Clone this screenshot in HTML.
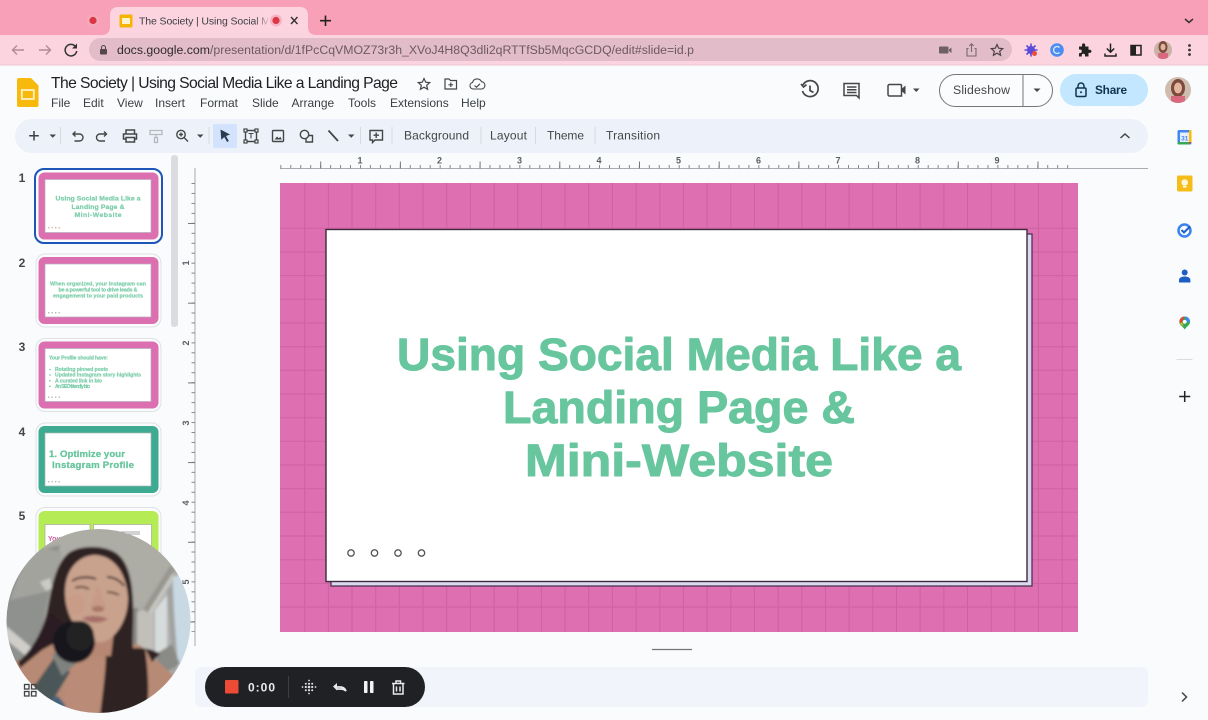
<!DOCTYPE html>
<html><head><meta charset="utf-8"><title>The Society</title>
<style>
html,body{margin:0;padding:0;width:1208px;height:720px;overflow:hidden;background:#f9fbfd}
svg{display:block;position:absolute;left:0;top:0}
text{font-family:"Liberation Sans",sans-serif}
.m{font-size:12px;fill:#3c4043}
.t{font-size:12px;fill:#444746}
.n{font-size:12px;fill:#444746;font-weight:bold}
.r{font-size:9px;fill:#5a5e63;font-weight:bold}
.i{fill:none;stroke:#444746;stroke-width:1.4}
.g{font-weight:bold;fill:#68c69e;stroke:#68c69e;stroke-linejoin:round;text-anchor:middle}
</style></head><body>
<svg width="1208" height="720" viewBox="0 0 1208 720" xmlns="http://www.w3.org/2000/svg">
<defs>
<pattern id="hs" x="280.300" y="160" width="9.960" height="20" patternUnits="userSpaceOnUse"><path d="M.5 5V8.500" stroke="#85888c" stroke-width="1"/></pattern>
<pattern id="hl" x="320.200" y="160" width="79.700" height="20" patternUnits="userSpaceOnUse"><path d="M.5 1.500V8.500" stroke="#75787c" stroke-width="1"/></pattern>
<pattern id="vs" x="180" y="183" width="20" height="9.960" patternUnits="userSpaceOnUse"><path d="M11.500 .5H15" stroke="#85888c" stroke-width="1"/></pattern>
<pattern id="vl" x="180" y="223" width="20" height="79.700" patternUnits="userSpaceOnUse"><path d="M8 .5H15" stroke="#75787c" stroke-width="1"/></pattern>
<linearGradient id="fade" x1="0" x2="1"><stop offset="0" stop-color="#fcd5e0" stop-opacity="0"/><stop offset="1" stop-color="#fcd5e0"/></linearGradient>
<clipPath id="cam"><circle cx="98.500" cy="621" r="92"/></clipPath>
<clipPath id="av1"><circle cx="1178" cy="90" r="13"/></clipPath>
<clipPath id="av2"><circle cx="1163" cy="50" r="9"/></clipPath>
<filter id="b0" x="-5%" y="-5%" width="110%" height="110%"><feGaussianBlur stdDeviation="1.300"/></filter>
</defs>

<!-- chrome -->
<rect width="1208" height="35" fill="#f9a0b9"/>
<rect y="35" width="1208" height="30" fill="#fcd4e0"/>
<path d="M102 35c5 0 8-3 8-8V15c0-5 3-8 8-8h182c5 0 8 3 8 8v12c0 5 3 8 8 8z" fill="#fcd4e0"/>
<rect y="64.500" width="1208" height="1" fill="#f2c6d3"/>
<circle cx="93" cy="20.500" r="6" fill="#f4a9b8"/><circle cx="93" cy="20.500" r="3.600" fill="#dc3545"/>
<rect x="119.500" y="14.500" width="13" height="13" rx="1.500" fill="#f4b400"/><rect x="122" y="18" width="8" height="6" fill="#fdf3d0"/>
<text x="139" y="24.500" font-size="10.500" fill="#3c4043" textLength="131">The Society | Using Social M</text>
<rect x="254" y="10" width="18" height="20" fill="url(#fade)"/>
<rect x="268" y="10" width="8" height="20" fill="#fcd5e0"/>
<circle cx="276" cy="20.500" r="6" fill="#f7b3c4"/><circle cx="276" cy="20.500" r="3.600" fill="#dc3545"/>
<path d="M291 17l6.500 7M297.500 17l-6.500 7" stroke="#333" stroke-width="1.400"/>
<path d="M325.500 15.500v10.500M320 20.700h11" stroke="#222" stroke-width="1.600"/>
<path d="M1185 19l4 3.500 4-3.500" fill="none" stroke="#333" stroke-width="1.500"/>
<path d="M24 50H12.500M17 45.500l-4.500 4.500 4.500 4.500" fill="none" stroke="#b08a96" stroke-width="1.400"/>
<path d="M39 50h11.500M46 45.500l4.500 4.500-4.500 4.500" fill="none" stroke="#b08a96" stroke-width="1.400"/>
<path d="M75.500 46.500a5.800 5.800 0 1 0 1.200 4.500" fill="none" stroke="#333" stroke-width="1.500"/><path d="M77 43.500v5h-5z" fill="#333"/>
<rect x="89" y="38" width="923" height="23" rx="11.500" fill="#e2bcc8"/>
<rect x="100" y="49" width="7" height="5.500" rx="1" fill="#55474c"/><path d="M101.500 49v-1.500a2 2 0 0 1 4 0V49" fill="none" stroke="#55474c" stroke-width="1.100"/>
<text x="117" y="53.800" font-size="12.300" textLength="577" fill="#6d5a62"><tspan fill="#2f2a2c">docs.google.com</tspan>/presentation/d/1fPcCqVMOZ73r3h_XVoJ4H8Q3dli2qRTTfSb5MqcGCDQ/edit#slide=id.p</text>
<path d="M940 46.500h7.500a1 1 0 0 1 1 1v5a1 1 0 0 1-1 1H940a1 1 0 0 1-1-1v-5a1 1 0 0 1 1-1zM949 49.500l2.500-2v5.500l-2.500-2z" fill="#6f5f66"/>
<path d="M968.500 48.500h-1.500v7.500h9v-7.500h-1.500M971.500 52v-8M969.300 46l2.200-2.200 2.200 2.200" fill="none" stroke="#7a6a70" stroke-width="1.100"/>
<path d="M997 44.500l1.700 3.700 4 .4-3 2.700.9 4-3.600-2.100-3.600 2.100.9-4-3-2.700 4-.4z" fill="none" stroke="#4a4045" stroke-width="1.200"/>
<circle cx="1031" cy="50" r="4" fill="#5b4bd8"/><path d="M1031 43.500v13M1024.500 50h13M1026.500 45.500l9 9M1035.500 45.500l-9 9" stroke="#5b4bd8" stroke-width="1.600"/><circle cx="1034.500" cy="53.500" r="2.500" fill="#ea4d3c"/>
<circle cx="1057" cy="50" r="6.800" fill="#4b8df0"/><path d="M1059.500 47.500a3.500 3.500 0 1 0 0 5" fill="none" stroke="#dfeafc" stroke-width="1.300"/>
<path d="M1079 46.500h3v-1.500a1.600 1.600 0 0 1 3.200 0v1.500h3.300v3.200h1.300a1.600 1.600 0 0 1 0 3.200h-1.300v3.600h-3.500v-1.200a1.600 1.600 0 0 0-3.200 0v1.200H1079v-3.400h1a1.800 1.800 0 0 0 0-3.600h-1z" fill="#222"/>
<path d="M1110.500 43.500v8.500M1106.800 48.500l3.700 3.700 3.700-3.700M1105 53.500v2.500h11v-2.500" fill="none" stroke="#222" stroke-width="1.500"/>
<rect x="1131" y="45.500" width="10" height="9.500" fill="none" stroke="#222" stroke-width="1.500"/><rect x="1131" y="45.500" width="5" height="9.500" fill="#222"/>
<g clip-path="url(#av2)"><rect x="1153" y="40" width="20" height="20" fill="#c9b3a5"/><ellipse cx="1163" cy="47" rx="4.500" ry="6" fill="#7c4a3c"/><ellipse cx="1163" cy="47" rx="2.500" ry="3.300" fill="#e0b49e"/><rect x="1158" y="53" width="10" height="7" fill="#d8697f"/></g>
<g fill="#333"><circle cx="1189.500" cy="45.500" r="1.400"/><circle cx="1189.500" cy="50" r="1.400"/><circle cx="1189.500" cy="54.500" r="1.400"/></g>

<!-- doc header -->
<path d="M19 78h12l7.500 7.500V105a2 2 0 0 1-2 2H19a2 2 0 0 1-2-2V80a2 2 0 0 1 2-2z" fill="#f6b90c"/>
<rect x="21.800" y="90" width="12" height="9" fill="none" stroke="#fdf0c0" stroke-width="1.800"/>
<text x="51" y="88" font-size="15.700" fill="#202124" textLength="347">The Society | Using Social Media Like a Landing Page</text>
<path d="M424 78.500l1.700 3.700 4 .4-3 2.700.9 4-3.600-2.100-3.600 2.100.9-4-3-2.700 4-.4z" class="i" style="stroke-width:1.200"/>
<path d="M445 79h4l1.500 1.500h6v8.500h-11.500zM450.800 82.500v4.500M448.500 84.800h4.600" class="i" style="stroke-width:1.200"/>
<path d="M473 89a3.300 3.300 0 0 1-.5-6.500 4.800 4.800 0 0 1 9-.8 3.700 3.700 0 0 1 .5 7.300zM474.500 85.500l2 1.700 3.500-3.400" class="i" style="stroke-width:1.100"/>
<g class="m"><text x="51" y="107">File</text><text x="83" y="107">Edit</text><text x="117" y="107">View</text><text x="155" y="107">Insert</text><text x="200" y="107">Format</text><text x="252" y="107">Slide</text><text x="291.500" y="107">Arrange</text><text x="348" y="107">Tools</text><text x="390" y="107">Extensions</text><text x="461" y="107">Help</text></g>
<path d="M803 85a8 8 0 1 1-.5 6M801 84l2.500 3 3-2.300M810 85.500v5l3.500 2" fill="none" stroke="#444746" stroke-width="1.700"/>
<path d="M844 83.500h15v14.500l-2.500-2.500H844zM847 87h9.500M847 89.800h9.500M847 92.500h9.500" fill="none" stroke="#444746" stroke-width="1.500"/>
<path d="M889.500 84.500h11a1 1 0 0 1 1 1V96h-12a1.500 1.500 0 0 1-1.500-1.500V86a1.500 1.500 0 0 1 1.500-1.500z" fill="none" stroke="#444746" stroke-width="1.500"/><path d="M901.500 89l4-3.500v9l-4-3.500z" fill="#444746"/>
<path d="M913 88.500h6.500l-3.250 3.500z" fill="#444746"/>
<rect x="939.500" y="74.500" width="113" height="32" rx="16" fill="#fafcfe" stroke="#747775"/><path d="M1023 74.500v32" stroke="#747775"/>
<text x="953" y="94" font-size="12.300" fill="#444746" textLength="57">Slideshow</text>
<path d="M1033.500 88.500h7l-3.500 3.500z" fill="#444746"/>
<rect x="1060" y="74" width="88" height="32" rx="16" fill="#c2e7ff"/>
<rect x="1076" y="88" width="10" height="8.500" rx="1.300" fill="none" stroke="#12334f" stroke-width="1.500"/><path d="M1078 88v-2a3 3 0 0 1 6 0v2" fill="none" stroke="#12334f" stroke-width="1.500"/><circle cx="1081" cy="92.200" r="1" fill="#12334f"/>
<text x="1095" y="94" font-size="11.800" font-weight="bold" fill="#12334f" textLength="32">Share</text>
<g clip-path="url(#av1)"><rect x="1164" y="76" width="28" height="28" fill="#cfbdb0"/><ellipse cx="1178" cy="88" rx="7" ry="9" fill="#7c4a3c"/><ellipse cx="1178" cy="88" rx="4" ry="5.500" fill="#e3b6a0"/><rect x="1171" y="96" width="14" height="9" fill="#d8697f"/></g>

<!-- toolbar -->
<rect x="15" y="119" width="1133" height="34" rx="17" fill="#edf2fa"/>
<rect x="213" y="124" width="24" height="24" rx="2" fill="#d3e3fd"/>
<g stroke="#d5d9e0" stroke-width="1"><path d="M60.500 127v17M209 127v17M360.500 127v17M392 127v17M481 127v17M535.500 127v17M595 127v17"/></g>
<path d="M34 131v9.500M29.200 135.700h9.600" stroke="#3c4043" stroke-width="1.500"/>
<path d="M49.500 134.500h6.500l-3.250 3.200zM197 134.500h6.500l-3.250 3.200zM348 134.500h6.500l-3.250 3.200z" fill="#444746"/>
<path d="M73 134h6.500a3.500 3.500 0 0 1 0 7H74.500M75.500 131.500L73 134l2.500 2.500" class="i"/>
<path d="M106.500 134H100a3.500 3.500 0 0 0 0 7h5M104 131.500l2.500 2.500-2.500 2.500" class="i"/>
<path d="M126 134v-4h8.500v4M126 139h-2.500v-5h13v5H134M126 137.500h8.500v4.500H126z" class="i" style="stroke-width:1.500"/>
<path d="M150 130.500h12v4h-12zM156 134.500v3M154.500 137.500h3v5h-3z" fill="none" stroke="#b5b9bf" stroke-width="1.300"/>
<circle cx="181" cy="134.500" r="4.200" class="i"/><path d="M184 137.500l4 4M179 134.500h4M181 132.500v4" class="i"/>
<path d="M220.500 129.500l9.500 5-4 1.500 2.800 5-1.700 1-2.800-5-3 2.800z" fill="#2c3a4d"/>
<path d="M245.500 130.500h11M245.500 141.500h11M245.500 130.500v11M256.500 130.500v11" class="i"/><g fill="#edf2fa" stroke="#444746" stroke-width="1.200"><rect x="244" y="129" width="3" height="3"/><rect x="255" y="129" width="3" height="3"/><rect x="244" y="140" width="3" height="3"/><rect x="255" y="140" width="3" height="3"/></g><path d="M248.500 133.500h5M251 133.500v5" class="i" style="stroke-width:1.100"/>
<rect x="272.500" y="130.500" width="11" height="11" rx="1" class="i"/><path d="M274.500 139.500l2.500-3 1.800 1.800 1.500-1.500 1.500 2.700z" fill="#444746"/>
<circle cx="304.500" cy="134.500" r="4.200" class="i"/><path d="M309 135.500h3.500v6.500h-6.500v-3" class="i"/>
<path d="M328.500 130.500l9.500 10.500" stroke="#444746" stroke-width="1.800"/>
<path d="M370 130.500h12.500v9.500h-7.500l-2.500 2.500V140H370zM376.200 132.500v5.500M373.500 135.200h5.500" class="i"/>
<g class="t"><text x="404" y="139.500" textLength="65">Background</text><text x="490" y="139.500" textLength="37">Layout</text><text x="547" y="139.500" textLength="37">Theme</text><text x="606" y="139.500" textLength="54">Transition</text></g>
<path d="M1120.500 138l4.500-4 4.500 4" fill="none" stroke="#444746" stroke-width="1.500"/>

<!-- rulers -->
<path d="M280 168.500H1148" stroke="#a8acb2" stroke-width="1"/>
<rect x="280" y="160" width="790" height="8.500" fill="url(#hs)"/><rect x="280" y="160" width="790" height="8.500" fill="url(#hl)"/>
<g class="r" text-anchor="middle"><text x="360" y="163.500">1</text><text x="439.500" y="163.500">2</text><text x="519.500" y="163.500">3</text><text x="599" y="163.500">4</text><text x="678.500" y="163.500">5</text><text x="758.500" y="163.500">6</text><text x="838" y="163.500">7</text><text x="917.500" y="163.500">8</text><text x="997" y="163.500">9</text></g>
<path d="M195 168V646" stroke="#a8acb2" stroke-width="1"/>
<rect x="188" y="183" width="7" height="449" fill="url(#vs)"/><rect x="188" y="183" width="7" height="449" fill="url(#vl)"/>
<g class="r" text-anchor="middle"><text transform="translate(189,263) rotate(-90)">1</text><text transform="translate(189,343) rotate(-90)">2</text><text transform="translate(189,423) rotate(-90)">3</text><text transform="translate(189,503) rotate(-90)">4</text><text transform="translate(189,582) rotate(-90)">5</text></g>

<!-- slide -->
<rect x="280" y="183" width="798" height="449" fill="#de6fb1"/>
<path d="M304.700 183V632M328.400 183V632M352 183V632M375.700 183V632M399.400 183V632M423 183V632M446.700 183V632M470.400 183V632M494.100 183V632M517.700 183V632M541.400 183V632M565.100 183V632M588.700 183V632M612.400 183V632M636.100 183V632M659.800 183V632M683.400 183V632M707.100 183V632M730.800 183V632M754.400 183V632M778.100 183V632M801.800 183V632M825.500 183V632M849.100 183V632M872.800 183V632M896.500 183V632M920.100 183V632M943.800 183V632M967.500 183V632M991.200 183V632M1014.800 183V632M1038.500 183V632M1062.200 183V632M280 228.300H1078M280 252H1078M280 275.600H1078M280 299.300H1078M280 323H1078M280 346.700H1078M280 370.300H1078M280 394H1078M280 417.700H1078M280 441.300H1078M280 465H1078M280 488.700H1078M280 512.300H1078M280 536H1078M280 559.700H1078M280 583.400H1078M280 607H1078" stroke="#b5508c" stroke-width="1" fill="none" opacity=".42"/>
<rect x="331" y="234" width="701" height="352" fill="#dcd9f0" stroke="#4a3450" stroke-width="1.300"/>
<rect x="326" y="229.500" width="701" height="352" fill="#fff" stroke="#3d2b3f" stroke-width="1.400"/>
<g style="font-size:45px;stroke-width:1px" class="g"><text x="679" y="370" textLength="564" lengthAdjust="spacingAndGlyphs">Using Social Media Like a</text><text x="679" y="423" textLength="352" lengthAdjust="spacingAndGlyphs">Landing Page &amp;</text><text x="679" y="476" textLength="308" lengthAdjust="spacingAndGlyphs">Mini-Website</text></g>
<g fill="none" stroke="#555" stroke-width="1.300"><circle cx="351" cy="553" r="3.200"/><circle cx="374.500" cy="553" r="3.200"/><circle cx="398" cy="553" r="3.200"/><circle cx="421.500" cy="553" r="3.200"/></g>
<path d="M652 649.500h40" stroke="#70757a" stroke-width="1.200"/>

<!-- side panel -->
<rect x="171" y="155" width="7" height="172" rx="3" fill="#dadce0"/>
<g class="n" text-anchor="middle"><text x="22" y="182">1</text><text x="22" y="267">2</text><text x="22" y="351">3</text><text x="22" y="436">4</text><text x="22" y="520">5</text></g>

<rect x="35" y="169" width="127" height="74" rx="9" fill="#f9fbfd" stroke="#1c56b8" stroke-width="2"/>
<rect x="38.500" y="172.500" width="120" height="67" rx="6" fill="#dc6fb0"/><rect x="45" y="179.500" width="106" height="53" fill="#fff" stroke="#b9aac0" stroke-width=".7"/>
<g class="g" style="font-size:6.800px;stroke-width:.25px;opacity:.85"><text x="98" y="200.500" textLength="85">Using Social Media Like a</text><text x="98" y="209" textLength="53">Landing Page &amp;</text><text x="98" y="217" textLength="47">Mini-Website</text></g>
<g fill="#d3b7a6"><rect x="48" y="227" width="1.400" height="1.400"/><rect x="51.500" y="227" width="1.400" height="1.400"/><rect x="55" y="227" width="1.400" height="1.400"/><rect x="58.500" y="227" width="1.400" height="1.400"/></g>

<rect x="36" y="254" width="125" height="73" rx="9" fill="#f9fbfd" stroke="#dfe1e5" stroke-width="1"/>
<rect x="38.500" y="257" width="120" height="67" rx="6" fill="#dc6fb0"/><rect x="45" y="264" width="106" height="53" fill="#fff" stroke="#b9aac0" stroke-width=".7"/>
<g class="g" style="font-size:5.500px;stroke-width:.2px;opacity:.85"><text x="98" y="285.500" textLength="96">When organized, your Instagram can</text><text x="98" y="291.500" textLength="79">be a powerful tool to drive leads &amp;</text><text x="98" y="297.500" textLength="90">engagement to your paid products</text></g>
<g fill="#b9b9b9"><rect x="48" y="312" width="1.400" height="1.400"/><rect x="51.500" y="312" width="1.400" height="1.400"/><rect x="55" y="312" width="1.400" height="1.400"/><rect x="58.500" y="312" width="1.400" height="1.400"/></g>

<rect x="36" y="338.500" width="125" height="73" rx="9" fill="#f9fbfd" stroke="#dfe1e5" stroke-width="1"/>
<rect x="38.500" y="341.500" width="120" height="67" rx="6" fill="#dc6fb0"/><rect x="45" y="348.500" width="106" height="53" fill="#fff" stroke="#b9aac0" stroke-width=".7"/>
<g class="g" style="font-size:5.200px;text-anchor:start;stroke-width:.2px;opacity:.85"><text x="49" y="359.500" textLength="59">Your Profile should have:</text><text x="55" y="371" textLength="53">Rotating pinned posts</text><text x="55" y="376.600" textLength="86">Updated Instagram story highlights</text><text x="55" y="382.300" textLength="47">A curated link in bio</text><text x="55" y="387.800" textLength="35">An SEO friendly bio</text></g>
<g fill="#6ccaa2"><circle cx="50" cy="369.500" r=".8"/><circle cx="50" cy="375" r=".8"/><circle cx="50" cy="380.700" r=".8"/><circle cx="50" cy="386.300" r=".8"/></g>
<g fill="#b9b9b9"><rect x="48" y="396.500" width="1.400" height="1.400"/><rect x="51.500" y="396.500" width="1.400" height="1.400"/><rect x="55" y="396.500" width="1.400" height="1.400"/><rect x="58.500" y="396.500" width="1.400" height="1.400"/></g>

<rect x="36" y="423" width="125" height="73" rx="9" fill="#f9fbfd" stroke="#dfe1e5" stroke-width="1"/>
<rect x="38.500" y="426" width="120" height="67" rx="6" fill="#3faa92"/><rect x="45" y="433" width="106" height="53" fill="#fff" stroke="#a9b8b0" stroke-width=".7"/>
<g class="g" style="font-size:9.600px;text-anchor:start;stroke-width:.3px"><text x="49" y="457" textLength="76">1. Optimize your</text><text x="52" y="468" textLength="82">Instagram Profile</text></g>
<g fill="#b9b9b9"><rect x="48" y="481" width="1.400" height="1.400"/><rect x="51.500" y="481" width="1.400" height="1.400"/><rect x="55" y="481" width="1.400" height="1.400"/><rect x="58.500" y="481" width="1.400" height="1.400"/></g>

<rect x="36" y="507.500" width="125" height="60" rx="9" fill="#f9fbfd" stroke="#dfe1e5" stroke-width="1"/>
<path d="M38.500 560v-43a6 6 0 0 1 6-6h108a6 6 0 0 1 6 6v43z" fill="#b5ec55"/><rect x="45" y="524.500" width="45" height="40" fill="#fff" stroke="#a9a9a0" stroke-width=".7"/><rect x="93.500" y="524.500" width="58" height="40" fill="#fff" stroke="#a9a9a0" stroke-width=".7"/>
<text x="48" y="541" font-size="7" fill="#d05aa0" font-weight="bold">You</text>
<path d="M118 532h22M118 534h22" stroke="#888" stroke-width=".7"/>

<!-- right rail -->
<rect x="1177.500" y="130" width="14" height="14.500" rx="1.500" fill="#4285f4"/><rect x="1180" y="132.500" width="9.500" height="9.500" fill="#e8effc"/><path d="M1177.500 142h11.500v2.500h-10a1.500 1.500 0 0 1-1.500-1.500z" fill="#34a853"/><path d="M1189 130h1a1.500 1.500 0 0 1 1.500 1.500V142H1189z" fill="#fbbc04"/><path d="M1189 142h2.500l-2.500 2.500z" fill="#ea4335"/><text x="1184.700" y="140.500" font-size="6.500" font-weight="bold" fill="#4285f4" text-anchor="middle">31</text>
<rect x="1177" y="175.500" width="15.500" height="16" rx="1.500" fill="#f6bd1a"/><circle cx="1184.700" cy="182.500" r="3.300" fill="#fff6d8"/><rect x="1183" y="186" width="3.500" height="1.700" fill="#fff6d8"/>
<circle cx="1184.500" cy="230.500" r="6" fill="none" stroke="#3b82ee" stroke-width="2.500"/><path d="M1181.500 230l2.500 2.500 6-6" fill="none" stroke="#1a5ec9" stroke-width="2"/>
<circle cx="1184.700" cy="272.500" r="3" fill="#1d5dc4"/><path d="M1179 282.500v-2.500c0-2.300 2.600-3.500 5.700-3.500s5.700 1.200 5.700 3.500v2.500z" fill="#1d5dc4"/>
<path d="M1184.700 316.500c-3.100 0-5.400 2.400-5.400 5.300 0 3.300 3.500 4.600 5.400 7.700 1.900-3.100 5.400-4.400 5.400-7.700 0-2.900-2.300-5.300-5.400-5.300z" fill="#34a853"/><path d="M1179.300 321.800a5.400 5.400 0 0 1 5.400-5.300l-3.500 6.600z" fill="#ea4335"/><path d="M1184.700 316.500a5.400 5.400 0 0 1 5.400 5.300l-3 .5z" fill="#4285f4"/><circle cx="1184.700" cy="321.800" r="1.900" fill="#fff"/><path d="M1180 323.500l2.200-1 1.500 4z" fill="#fbbc04"/>
<path d="M1176.500 359.500h16" stroke="#dadce0"/>
<path d="M1184.700 391v11M1179.200 396.500h11" stroke="#222" stroke-width="1.500"/>
<path d="M1182 692.500l4.500 4.500-4.500 4.500" fill="none" stroke="#444746" stroke-width="1.500"/>

<!-- bottom notes -->
<rect x="195" y="667" width="953" height="40" rx="6" fill="#f1f4fa"/>
<rect x="205" y="667" width="220" height="40" rx="20" fill="#202124"/>
<rect x="225" y="680" width="13.500" height="13.500" rx="1" fill="#ee4b36"/>
<text x="248" y="691.300" font-size="12" font-weight="bold" fill="#e8eaed" textLength="27">0:00</text>
<path d="M288.500 676v22" stroke="#3c4043"/>
<g fill="#dfe1e5"><circle cx="309" cy="680.500" r=".9"/><circle cx="309" cy="693.500" r=".9"/><circle cx="302.500" cy="687" r=".9"/><circle cx="315.500" cy="687" r=".9"/>
<circle cx="305.800" cy="683.800" r="1"/><circle cx="309" cy="683.800" r="1.100"/><circle cx="312.200" cy="683.800" r="1"/><circle cx="305.800" cy="687" r="1.100"/><circle cx="309" cy="687" r="1.300"/><circle cx="312.200" cy="687" r="1.100"/><circle cx="305.800" cy="690.200" r="1"/><circle cx="309" cy="690.200" r="1.100"/><circle cx="312.200" cy="690.200" r="1"/></g>
<path d="M335 687h5c3 0 5 1.500 6 4-1.500-1.500-3.500-2-5.500-2H337" fill="none" stroke="#e8eaed" stroke-width="1.800"/><path d="M333 686.500l4-3.500v7.500z" fill="#e8eaed"/>
<rect x="364" y="681" width="3.500" height="12" rx=".8" fill="#f1f3f4"/><rect x="370" y="681" width="3.500" height="12" rx=".8" fill="#f1f3f4"/>
<path d="M392 683.500h12.500M396 683v-2h4.500v2M393.500 683.500v10.500h9.500v-10.500M396.500 686.500v5M400 686.500v5" fill="none" stroke="#e8eaed" stroke-width="1.500"/>

<!-- webcam -->
<g clip-path="url(#cam)">
<g filter="url(#b0)">
<rect x="0" y="525" width="200" height="195" fill="#adaca5"/>
<path d="M0 560L60 545 48 600 40 640 0 680z" fill="#8f918e"/>
<path d="M30 545L62 552 54 590 10 600z" fill="#a3a39e"/>
<path d="M6 626L32 648 26 656 4 638z" fill="#cfcec9"/>
<path d="M40 582l10-4 2 10-6 3z" fill="#cbcbc5"/>
<path d="M132 608h6v40h-6z" fill="#8a8683"/>
<path d="M137 612l16-4v45h-16z" fill="#c2bfb9"/>
<path d="M153 608l20-30 20-10v100h-40z" fill="#b2b4b4"/>
<path d="M155 610l12-15v55l-12 3z" fill="#d6dbdb"/>
<path d="M173 578l20-12v95l-17 12z" fill="#c8d9e4"/>
<path d="M167 590l5-6 6 84-5 6z" fill="#a2a3a0"/>
<path d="M143 609l27-43 5 3-27 44z" fill="#98978f"/>
<path d="M148 612l24-38 3 2-24 38z" fill="#c8c7c1"/>
<path d="M156 654l16-10 8 20-20 12z" fill="#8a8a86"/>
<!-- skin body -->
<path d="M-2 720L12 664 45 645 90 640 140 645 176 678 160 720z" fill="#b78a74"/>
<path d="M70 660h40l15 60H60z" fill="#ba8b77"/>
<!-- hair back -->
<path d="M18 662C30 652 42 634 47 612 52 585 56 562 70 552 82 545 104 545 116 553 128 561 132 580 133 600 134 620 132 640 133 648 142 648 152 648 160 654L152 662 145 648C148 670 150 695 146 712L100 716C103 690 106 670 106 650L60 640 42 650 20 668z" fill="#2e2324"/>
<path d="M18 662C30 652 42 636 50 612L66 625 62 640 40 650z" fill="#2a1f20"/>
<!-- neck -->
<path d="M84 630h30l-3 26H90z" fill="#b78773"/>
<!-- face -->
<path d="M65 592C65 570 78 556 94 555 112 555 126 570 128 598 128 618 118 634 108 640 102 643 96 643 90 640 74 630 65 612 65 592z" fill="#c9a28d"/>
<ellipse cx="76" cy="605" rx="9" ry="11" fill="#c99a86" opacity=".7"/>
<path d="M72 581C78 577 88 576 96 579M107 577C113 577 120 580 124 586" fill="none" stroke="#3d2a26" stroke-width="1.900"/>
<path d="M75 588C80 586 85 587 89 589M107 592C111 592 115 593 119 595" fill="none" stroke="#4c302a" stroke-width="1.700"/>
<path d="M96 586C96 595 92 604 90 608 94 612 104 612 106 608 104 602 101 595 100 588z" fill="#c69a86"/>
<ellipse cx="98" cy="609" rx="6" ry="3" fill="#a87666"/>
<path d="M82 618C90 615 100 615 108 619 100 624 90 624 82 618z" fill="#a67069"/>
<!-- mic -->
<path d="M33 688L54 658 70 672 52 702 44 702z" fill="#4c5659"/>
<path d="M52 655L68 645 80 660 62 676z" fill="#7f827f"/>
<path d="M50 699l8-3 8 10-6 4z" fill="#44627a"/>
<circle cx="74" cy="642" r="21" fill="#17171a"/><ellipse cx="80" cy="636" rx="14" ry="15" fill="#202024"/>
</g>
</g>
<g fill="none" stroke="#444" stroke-width="1.300"><rect x="24.500" y="684.500" width="4.500" height="4.500"/><rect x="31.500" y="684.500" width="4.500" height="4.500"/><rect x="24.500" y="691.500" width="4.500" height="4.500"/><rect x="31.500" y="691.500" width="4.500" height="4.500"/></g>
</svg>
</body></html>
